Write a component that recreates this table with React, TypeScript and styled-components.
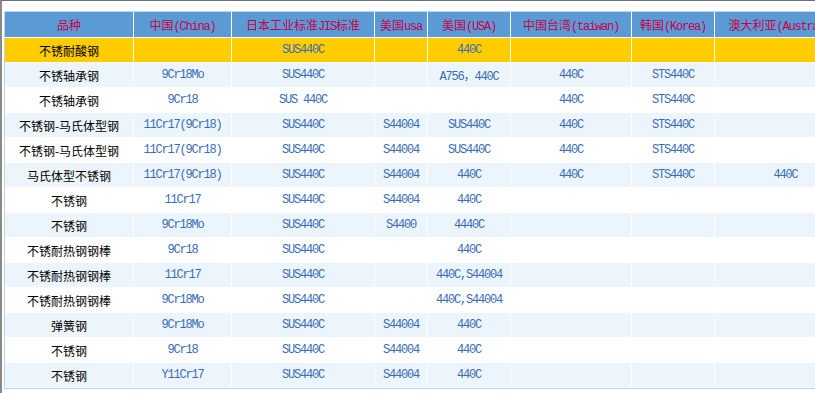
import styled, { createGlobalStyle } from "styled-components";

type Row = {
  name: string;
  codes: string[];
};

// 对照表数据：中国 / 日本 / 美国usa / 美国(USA) / 台湾 / 韩国 / 澳大利亚
const ROWS: Row[] = [
  { name: "不锈耐酸钢", codes: ["", "SUS440C", "", "440C", "", "", ""] },
  { name: "不锈轴承钢", codes: ["9Cr18Mo", "SUS440C", "", "A756，440C", "440C", "STS440C", ""] },
  { name: "不锈轴承钢", codes: ["9Cr18", "SUS 440C", "", "", "440C", "STS440C", ""] },
  { name: "不锈钢-马氏体型钢", codes: ["11Cr17(9Cr18)", "SUS440C", "S44004", "SUS440C", "440C", "STS440C", ""] },
  { name: "不锈钢-马氏体型钢", codes: ["11Cr17(9Cr18)", "SUS440C", "S44004", "SUS440C", "440C", "STS440C", ""] },
  { name: "马氏体型不锈钢", codes: ["11Cr17(9Cr18)", "SUS440C", "S44004", "440C", "440C", "STS440C", "440C"] },
  { name: "不锈钢", codes: ["11Cr17", "SUS440C", "S44004", "440C", "", "", ""] },
  { name: "不锈钢", codes: ["9Cr18Mo", "SUS440C", "S4400", "4440C", "", "", ""] },
  { name: "不锈耐热钢钢棒", codes: ["9Cr18", "SUS440C", "", "440C", "", "", ""] },
  { name: "不锈耐热钢钢棒", codes: ["11Cr17", "SUS440C", "", "440C,S44004", "", "", ""] },
  { name: "不锈耐热钢钢棒", codes: ["9Cr18Mo", "SUS440C", "", "440C,S44004", "", "", ""] },
  { name: "弹簧钢", codes: ["9Cr18Mo", "SUS440C", "S44004", "440C", "", "", ""] },
  { name: "不锈钢", codes: ["9Cr18", "SUS440C", "S44004", "440C", "", "", ""] },
  { name: "不锈钢", codes: ["Y11Cr17", "SUS440C", "S44004", "440C", "", "", ""] },
];

const HEADERS: { zh: string; en?: string; width: number }[] = [
  { zh: "品种", width: 129 },
  { zh: "中国", en: "(China)", width: 98 },
  { zh: "日本工业标准", en: "JIS", width: 143 },
  { zh: "美国", en: "usa", width: 53 },
  { zh: "美国", en: "(USA)", width: 83 },
  { zh: "中国台湾", en: "(taiwan)", width: 121 },
  { zh: "韩国", en: "(Korea)", width: 83 },
  { zh: "澳大利亚", en: "(Australia)", width: 142 },
];

const GlobalStyle = createGlobalStyle`
  html, body {
    margin: 0;
    padding: 0;
    overflow: hidden;
    background: #ffffff;
  }
`;

const App = () => {
  return (
    <>
      <GlobalStyle />
      <Frame>
        <Table>
          <thead>
            <tr>
              {HEADERS.map((h, i) => (
                <HeadCell key={i} $width={h.width}>
                  {h.zh}
                  {h.en && <Latin>{h.en}</Latin>}
                  {i === 2 && "标准"}
                </HeadCell>
              ))}
            </tr>
          </thead>
          <tbody>
            {ROWS.map((row, i) => (
              <DataRow key={i} $tone={i === 0 ? "hot" : i % 2 === 1 ? "tint" : "plain"}>
                <NameCell>{row.name}</NameCell>
                {row.codes.map((c, j) => (
                  <CodeCell key={j}>{c}</CodeCell>
                ))}
              </DataRow>
            ))}
          </tbody>
        </Table>
      </Frame>
    </>
  );
};

export default App;

const Frame = styled.div`
  width: 813px;
  height: 382px;
  overflow: hidden;
  border-top: 1px solid #6f6f6f;
  border-left: 2px solid #8a8a8a;
  padding: 10px 0 0 2px;
`;

const Table = styled.table`
  width: 854px;
  box-sizing: border-box;
  table-layout: fixed;
  border-collapse: separate;
  border-spacing: 0;
  border: 1px solid #bcd6ee;
`;

const HeadCell = styled.th<{ $width: number }>`
  width: ${({ $width }) => $width}px;
  box-sizing: border-box;
  height: 26px;
  padding: 0;
  background: #5b9bd5;
  color: #c8004a;
  border-right: 1px solid #ffffff;
  border-bottom: 1px solid #ffffff;
  font-family: "Noto Sans CJK SC", sans-serif;
  font-size: 12px;
  font-weight: normal;
  text-align: center;
  white-space: nowrap;
  overflow: hidden;
`;

const Latin = styled.span`
  font-family: "Liberation Mono", monospace;
  font-size: 12px;
  letter-spacing: -1.2px;
`;

const DataRow = styled.tr<{ $tone: "hot" | "tint" | "plain" }>`
  background: ${({ $tone }) =>
    $tone === "hot" ? "#ffcc00" : $tone === "tint" ? "#edf5fc" : "#ffffff"};
`;

const NameCell = styled.td`
  height: 25px;
  box-sizing: border-box;
  padding: 0;
  border-right: 1px solid #ffffff;
  border-bottom: 1px solid #ffffff;
  color: #000000;
  font-family: "Noto Sans CJK SC", sans-serif;
  font-size: 12px;
  text-align: center;
  white-space: nowrap;
`;

const CodeCell = styled.td`
  height: 25px;
  box-sizing: border-box;
  padding: 0;
  border-right: 1px solid #ffffff;
  border-bottom: 1px solid #ffffff;
  color: #3a6db5;
  font-family: "Liberation Mono", "Noto Sans CJK SC", monospace;
  font-size: 12px;
  letter-spacing: -1.2px;
  text-align: center;
  white-space: nowrap;
`;
